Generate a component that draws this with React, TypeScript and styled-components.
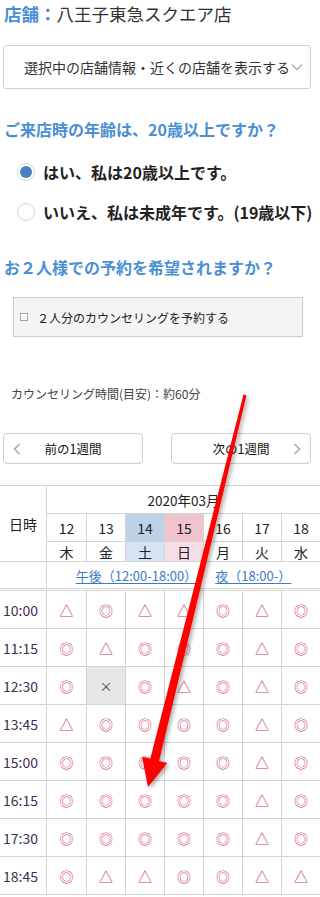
import React from "react";
import styled, { createGlobalStyle } from "styled-components";

const GlobalStyle = createGlobalStyle`
  html, body { margin: 0; padding: 0; background: #fff; }
  body { font-family: "Noto Sans CJK JP", "Noto Sans", sans-serif; color: #333; }
  * { box-sizing: border-box; }
`;

const Page = styled.div`
  position: relative;
  width: 320px;
  height: 897px;
  overflow: hidden;
  background: #fff;
`;

const StoreLine = styled.div`
  padding: 2px 4px 0;
  height: 26px;
  line-height: 24px;
  font-size: 17.5px;
  color: #333;
  white-space: nowrap;
`;

const StoreLabel = styled.span`
  color: #4a8fd3;
  font-weight: bold;
`;

const SelectBox = styled.div`
  margin: 19px 0 0 3px;
  width: 308px;
  height: 44px;
  border: 1px solid #cfcfcf;
  border-radius: 3px;
  display: flex;
  align-items: center;
  padding-left: 20px;
  font-size: 14px;
  color: #333;
  white-space: nowrap;
`;

const Chevron = styled.svg`
  margin-left: 1px;
  flex: none;
`;

const Heading = styled.h2<{ $mt: number }>`
  margin: ${(p) => p.$mt}px 0 0;
  padding-left: 4px;
  height: 24px;
  line-height: 24px;
  font-size: 16px;
  font-weight: bold;
  color: #4a8fd3;
  white-space: nowrap;
`;

const RadioList = styled.div`
  margin-top: 19px;
  display: flex;
  flex-direction: column;
  gap: 16px;
`;

const RadioRow = styled.label`
  display: flex;
  align-items: center;
  height: 24px;
  padding-left: 17px;
  gap: 8px;
  font-size: 16px;
  font-weight: bold;
  color: #222;
  white-space: nowrap;
`;

const RadioDot = styled.span<{ $checked: boolean }>`
  flex: none;
  width: 18px;
  height: 18px;
  border-radius: 50%;
  border: 1px solid #d6d6d6;
  background: #fff;
  display: flex;
  align-items: center;
  justify-content: center;
  &::after {
    content: "";
    width: 12px;
    height: 12px;
    border-radius: 50%;
    background: ${(p) => (p.$checked ? "#4a7fc0" : "transparent")};
  }
`;

const CheckPanel = styled.div`
  margin: 18px 0 0 13px;
  width: 290px;
  height: 40px;
  background: #f4f4f4;
  border: 1px solid #cbcbcb;
  display: flex;
  align-items: center;
  padding-left: 6px;
  gap: 9px;
  font-size: 12px;
  color: #222;
  white-space: nowrap;
`;

const CheckSquare = styled.span`
  flex: none;
  width: 8px;
  height: 8px;
  border: 1px solid #9aa6bf;
  background: #fff;
`;

const Duration = styled.p`
  margin: 48px 0 0;
  padding-left: 11px;
  height: 18px;
  line-height: 18px;
  font-size: 12px;
  color: #444;
`;

const WeekNav = styled.div`
  margin: 30px 0 0 3px;
  display: flex;
  gap: 28px;
`;

const WeekButton = styled.button<{ $dir: "prev" | "next" }>`
  position: relative;
  width: 140px;
  height: 31px;
  border: 1px solid #cccccc;
  border-radius: 4px;
  background: #fff;
  font-family: inherit;
  font-size: 12.5px;
  color: #111;
  padding: 0;
  display: flex;
  align-items: center;
  justify-content: center;
  & > svg {
    position: absolute;
    top: 50%;
    transform: translateY(-50%);
    ${(p) => (p.$dir === "prev" ? "left: 9px;" : "right: 9px;")}
  }
`;

const COLS = "47px 40px 39px 39px 39px 39px 39px 1fr";
const LINE = "#d3d3d3";

const HeadGrid = styled.div`
  margin-top: 21px;
  display: grid;
  grid-template-columns: ${COLS};
  grid-template-rows: 28px 28px 20px 27px;
  border-top: 1px solid ${LINE};
`;

const Corner = styled.div`
  grid-row: 1 / 4;
  grid-column: 1;
  border-right: 1px solid ${LINE};
  border-bottom: 1px solid ${LINE};
  display: flex;
  align-items: center;
  justify-content: center;
  font-size: 14px;
  color: #222;
`;

const MonthCell = styled.div`
  grid-column: 2 / 9;
  border-bottom: 1px solid ${LINE};
  display: flex;
  align-items: center;
  justify-content: center;
  font-size: 13.5px;
  color: #222;
`;

const DayCell = styled.div<{ $bg: string; $last: boolean }>`
  background: ${(p) => p.$bg};
  border-right: ${(p) => (p.$last ? "none" : `1px solid ${LINE}`)};
  border-bottom: 1px solid ${LINE};
  display: flex;
  align-items: center;
  justify-content: center;
  font-size: 14px;
  color: #222;
`;

const EmptyCell = styled.div`
  border-right: 1px solid ${LINE};
  border-bottom: 1px solid ${LINE};
`;

const LinkCell = styled.div`
  grid-column: 2 / 9;
  border-bottom: 1px solid ${LINE};
  display: flex;
  align-items: center;
  justify-content: center;
  gap: 18px;
  font-size: 13px;
  white-space: nowrap;
`;

const SlotLink = styled.a`
  color: #3b7bc4;
  text-decoration: underline;
  text-underline-offset: 2px;
`;

const BodyGrid = styled.div`
  margin-top: 1px;
  display: grid;
  grid-template-columns: ${COLS};
  grid-auto-rows: 38px;
  border-top: 1px solid ${LINE};
`;

const TimeCell = styled.div`
  border-right: 1px solid ${LINE};
  border-bottom: 1px solid ${LINE};
  display: flex;
  align-items: center;
  padding-left: 3px;
  font-size: 14px;
  color: #3d3052;
`;

const SlotCell = styled.div<{ $closed: boolean; $last: boolean }>`
  background: ${(p) => (p.$closed ? "#e6e6e6" : "#fff")};
  border-right: ${(p) => (p.$last ? "none" : `1px solid ${LINE}`)};
  border-bottom: 1px solid ${LINE};
  display: flex;
  align-items: center;
  justify-content: center;
  font-size: ${(p) => (p.$closed ? "13px" : "14px")};
  color: ${(p) => (p.$closed ? "#444" : "#d0336a")};
`;

const ArrowLayer = styled.svg`
  position: absolute;
  left: 0;
  top: 0;
  pointer-events: none;
`;

const days = [
  { d: "12", w: "木", top: "#fff", bot: "#fff" },
  { d: "13", w: "金", top: "#fff", bot: "#fff" },
  { d: "14", w: "土", top: "#bfd1e7", bot: "#d4e3f2" },
  { d: "15", w: "日", top: "#f1c4cd", bot: "#f5dde5" },
  { d: "16", w: "月", top: "#fff", bot: "#fff" },
  { d: "17", w: "火", top: "#fff", bot: "#fff" },
  { d: "18", w: "水", top: "#fff", bot: "#fff" },
];

const slots: [string, string][] = [
  ["10:00", "△◎△△◎△◎"],
  ["11:15", "◎△◎◎◎△◎"],
  ["12:30", "◎×◎△◎△◎"],
  ["13:45", "△◎◎◎◎△◎"],
  ["15:00", "◎◎◎◎◎△◎"],
  ["16:15", "◎◎◎◎◎△◎"],
  ["17:30", "◎◎◎◎◎△◎"],
  ["18:45", "◎△△◎◎△△"],
];

export default function App() {
  return (
    <>
      <GlobalStyle />
      <Page>
        <StoreLine>
          <StoreLabel>店舗：</StoreLabel>八王子東急スクエア店
        </StoreLine>

        <SelectBox>
          選択中の店舗情報・近くの店舗を表示する
          <Chevron width="12" height="8" viewBox="0 0 12 8">
            <polyline points="1,1.5 6,6.5 11,1.5" fill="none" stroke="#b3b3b3" strokeWidth="1.6" />
          </Chevron>
        </SelectBox>

        <Heading $mt={28}>ご来店時の年齢は、20歳以上ですか？</Heading>

        <RadioList>
          <RadioRow>
            <RadioDot $checked />
            はい、私は20歳以上です。
          </RadioRow>
          <RadioRow>
            <RadioDot $checked={false} />
            いいえ、私は未成年です。(19歳以下)
          </RadioRow>
        </RadioList>

        <Heading $mt={31}>お２人様での予約を希望されますか？</Heading>

        <CheckPanel>
          <CheckSquare />
          ２人分のカウンセリングを予約する
        </CheckPanel>

        <Duration>カウンセリング時間(目安)：約60分</Duration>

        <WeekNav>
          <WeekButton $dir="prev">
            <svg width="8" height="12" viewBox="0 0 8 12">
              <polyline points="6.5,1 1.5,6 6.5,11" fill="none" stroke="#aaa" strokeWidth="1.6" />
            </svg>
            前の1週間
          </WeekButton>
          <WeekButton $dir="next">
            次の1週間
            <svg width="8" height="12" viewBox="0 0 8 12">
              <polyline points="1.5,1 6.5,6 1.5,11" fill="none" stroke="#aaa" strokeWidth="1.6" />
            </svg>
          </WeekButton>
        </WeekNav>

        <HeadGrid>
          <Corner>日時</Corner>
          <MonthCell>2020年03月</MonthCell>
          {days.map((d, i) => (
            <DayCell key={"d" + d.d} $bg={d.top} $last={i === 6}>
              {d.d}
            </DayCell>
          ))}
          {days.map((d, i) => (
            <DayCell key={"w" + d.d} $bg={d.bot} $last={i === 6}>
              {d.w}
            </DayCell>
          ))}
          <EmptyCell />
          <LinkCell>
            <SlotLink>午後（12:00-18:00）</SlotLink>
            <SlotLink>夜（18:00-）</SlotLink>
          </LinkCell>
        </HeadGrid>

        <BodyGrid>
          {slots.map(([time, marks]) => (
            <React.Fragment key={time}>
              <TimeCell>{time}</TimeCell>
              {Array.from(marks).map((m, i) => (
                <SlotCell key={i} $closed={m === "×"} $last={i === 6}>
                  {m}
                </SlotCell>
              ))}
            </React.Fragment>
          ))}
        </BodyGrid>

        <ArrowLayer width="320" height="897" viewBox="0 0 320 897">
          <defs>
            <filter id="arrowShadow" x="-20%" y="-5%" width="140%" height="110%">
              <feDropShadow dx="2" dy="2" stdDeviation="2" floodColor="#000" floodOpacity="0.35" />
            </filter>
          </defs>
          <polygon
            points="243.5,394.6 246.5,395.4 159.1,760.9 167.3,762.9 148,787 142.1,756.7 150.3,758.7"
            fill="#ff0000"
            filter="url(#arrowShadow)"
          />
        </ArrowLayer>
      </Page>
    </>
  );
}
